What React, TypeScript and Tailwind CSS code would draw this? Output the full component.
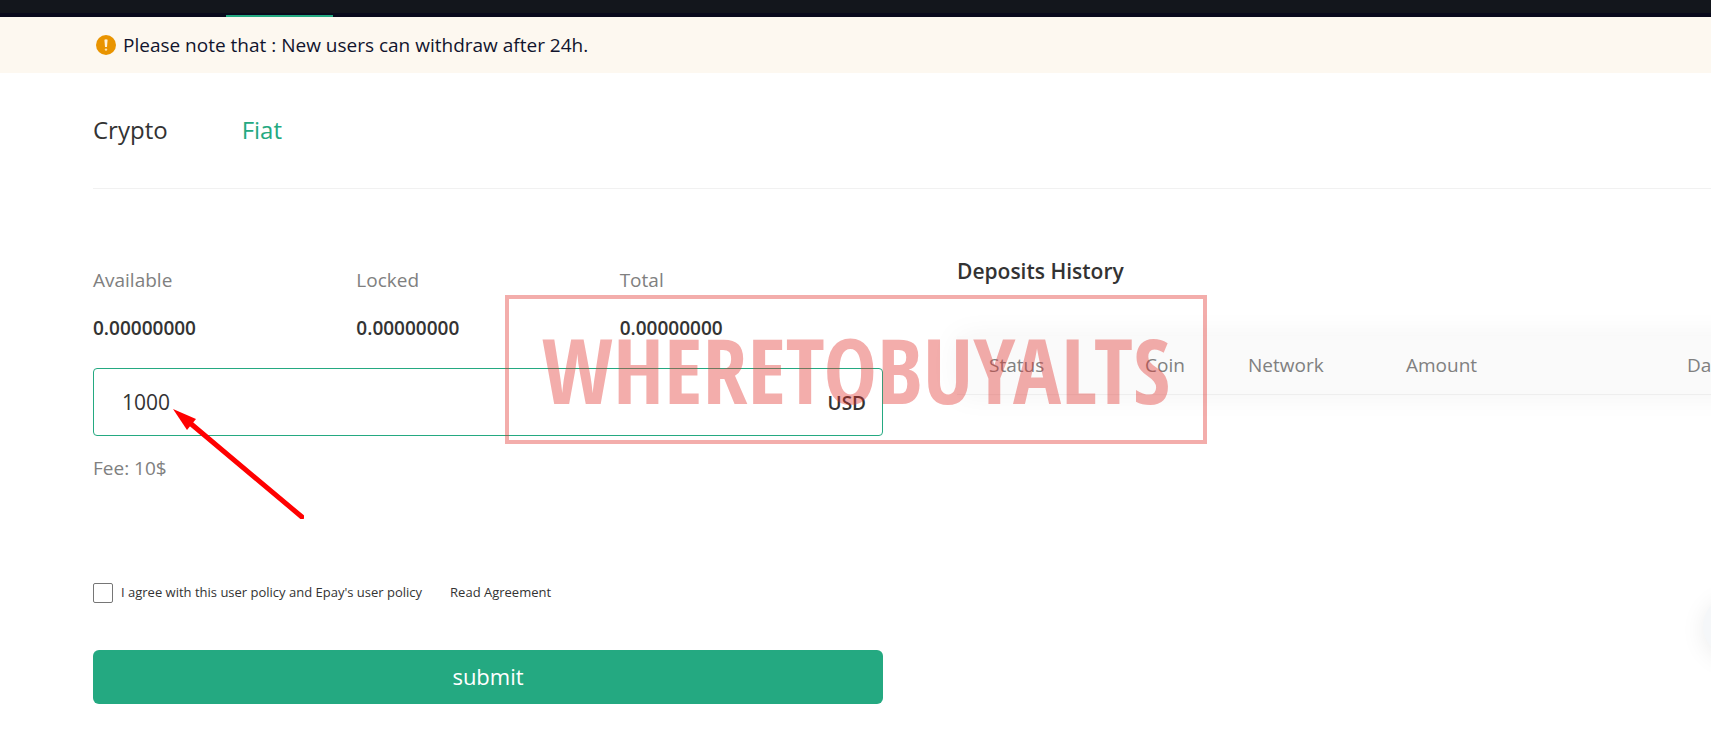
import React from "react";

const balances = [
  { label: "Available", value: "0.00000000" },
  { label: "Locked", value: "0.00000000" },
  { label: "Total", value: "0.00000000" },
];

function Notice() {
  return (
    <div className="flex h-14 items-center gap-[7px] bg-[#fdf8f0] pl-24 text-[#11142d]">
      <svg viewBox="0 0 20 20" className="size-5" aria-hidden="true">
        <circle cx="10" cy="10" r="10" fill="#e99400" />
        <path d="M8.4 4.8Q10 3.8 11.6 4.8L11 12H9z" fill="#fff3dc" />
        <circle cx="10" cy="14.6" r="1.2" fill="#fbdfae" />
      </svg>
      <p>Please note that : New users can withdraw after 24h.</p>
    </div>
  );
}

function Tabs() {
  return (
    <nav className="flex h-[116px] items-center gap-[74px] border-b border-[#f1f1f1] pb-0.5 text-2xl">
      <a href="#crypto">Crypto</a>
      <a href="#fiat" className="text-[#24a981]">Fiat</a>
    </nav>
  );
}

function WithdrawForm() {
  return (
    <form className="pt-[75px]" onSubmit={(e) => e.preventDefault()}>
      <dl className="grid grid-cols-3">
        {balances.map((b) => (
          <div key={b.label}>
            <dt className="leading-8 text-[#808080]">{b.label}</dt>
            <dd className="mt-4 leading-8 font-semibold">{b.value}</dd>
          </div>
        ))}
      </dl>
      <div className="mt-6 flex h-[68px] items-center rounded border border-[#24a981] pt-0.5 pr-4 pl-7">
        <input
          aria-label="Amount"
          defaultValue="1000"
          className="min-w-0 flex-1 bg-transparent text-[21px] outline-none"
        />
        <span className="font-semibold">USD</span>
      </div>
      <p className="mt-4 leading-8 text-[#808080]">Fee: 10$</p>
      <div className="mt-[93px] flex h-8 items-center text-[13px]">
        <input
          id="agree"
          type="checkbox"
          className="size-5 appearance-none rounded-xs border border-[#767676] bg-white checked:bg-[#24a981]"
        />
        <label htmlFor="agree" className="ml-2">I agree with this user policy and Epay's user policy</label>
        <a href="#agreement" className="ml-7">Read Agreement</a>
      </div>
      <button type="submit" className="mt-[41px] h-[54px] w-full rounded-md bg-[#24a981] pb-0.5 text-[22px] text-white">
        submit
      </button>
    </form>
  );
}

function History() {
  return (
    <section className="min-w-0 pt-[66px]">
      <h2 className="text-[21px] leading-8 font-semibold">Deposits History</h2>
      <table className="mt-[49px] w-[860px] table-fixed text-left text-[#808080] shadow-[0_0_30px_rgba(0,0,0,0.05)]">
        <thead className="h-[58px] border-b border-[#eeeeee] bg-[#fafafa]">
          <tr>
            <th className="w-[188px] pl-8 font-normal">Status</th>
            <th className="w-[103px] font-normal">Coin</th>
            <th className="w-[158px] font-normal">Network</th>
            <th className="w-[281px] font-normal">Amount</th>
            <th className="font-normal">Date</th>
          </tr>
        </thead>
      </table>
    </section>
  );
}

export default function App() {
  return (
    <div className="relative min-h-screen overflow-hidden bg-white font-['Open_Sans',sans-serif] text-[19px] text-[#333333]">
      <header className="flex h-[17px] items-end border-b-4 border-[#090a1c] bg-[#13161c] pl-[226px]">
        <div className="relative top-1 h-0.5 w-[107px] bg-[#24a981]" />
      </header>
      <Notice />
      <main className="pl-[93px]">
        <Tabs />
        <div className="grid grid-cols-[790fr_754fr] gap-x-[74px]">
          <WithdrawForm />
          <History />
        </div>
      </main>
      <div className="pointer-events-none absolute top-[295px] left-[505px] flex h-[149px] w-[702px] items-center justify-center border-4 border-[#e1322d]/40 font-['Open_Sans_Condensed','Roboto_Condensed',Roboto,sans-serif] text-[90px] font-bold whitespace-nowrap text-[#e1322d]/40">
        WHERETOBUYALTS
      </div>
      <svg viewBox="0 0 132 112" className="pointer-events-none absolute top-[407px] left-[172px] h-28 w-33" aria-hidden="true">
        <path d="M18 16 130 110" stroke="#ff0000" strokeWidth="5" strokeLinecap="round" />
        <path d="M1 2 24 12 15 23Z" fill="#ff0000" />
      </svg>
      <button
        type="button"
        aria-label="Open chat"
        className="absolute top-[596px] -right-13 size-15 rounded-full bg-[#f5f7f9] shadow-[0_4px_24px_rgba(0,0,0,0.08)]"
      />
    </div>
  );
}
